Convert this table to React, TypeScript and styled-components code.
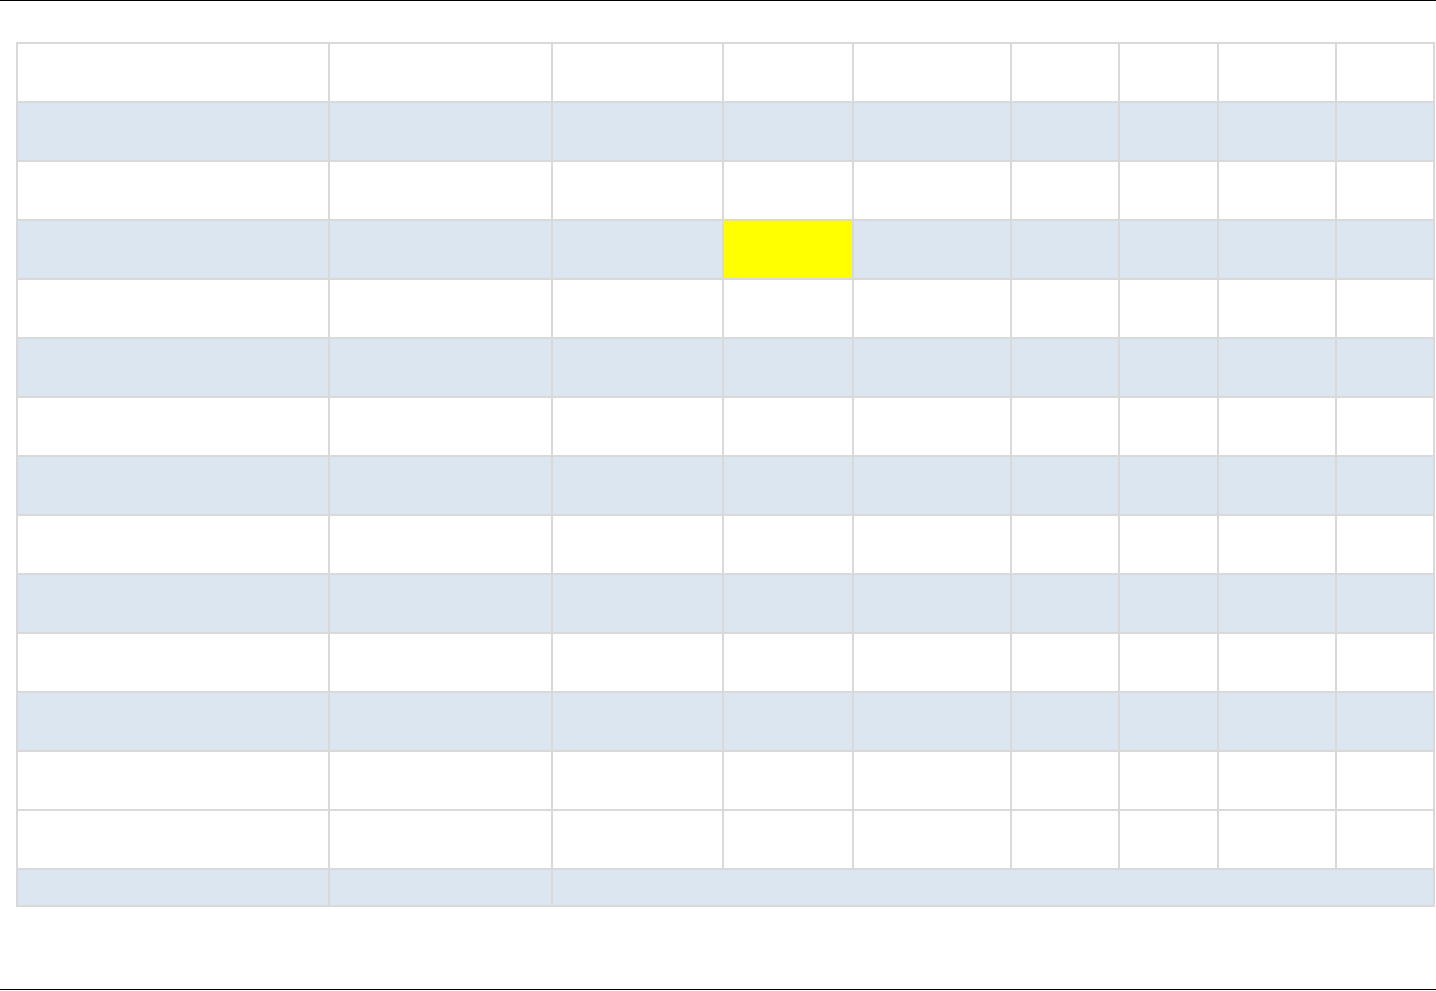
import React from "react";
import styled, { createGlobalStyle } from "styled-components";

const GlobalStyle = createGlobalStyle`
  html, body {
    margin: 0;
    padding: 0;
    background: #ffffff;
    font-family: "Liberation Sans", Arial, sans-serif;
  }
`;

const Page = styled.div`
  box-sizing: border-box;
  height: 990px;
  border-top: 1px solid #000;
  border-bottom: 1px solid #000;
  padding: 41px 0 0 16px;
`;

const Sheet = styled.div`
  display: grid;
  width: 1419px;
  grid-template-columns: 310px 221px 169px 128px 156px 106px 97px 116px 96px;
  grid-template-rows: repeat(14, 57px) 35px;
  gap: 2px;
  padding: 2px;
  box-sizing: border-box;
  background: #d9d9d9;
`;

const Cell = styled.div<{ $tone: "white" | "blue" | "yellow"; $span?: number }>`
  background: ${(p) =>
    p.$tone === "yellow" ? "#ffff00" : p.$tone === "blue" ? "#dce6f1" : "#ffffff"};
  grid-column: ${(p) => (p.$span ? `span ${p.$span}` : "auto")};
  font-size: 14px;
  color: #000;
`;

const COLS = 9;
// row shading, top to bottom (the short summary row is added after)
const tones: Array<"white" | "blue"> = [
  "white", "blue", "white", "blue", "white", "blue", "white",
  "blue", "white", "blue", "white", "blue", "white", "white",
];

export default function App() {
  return (
    <>
      <GlobalStyle />
      <Page>
        <Sheet>
          {tones.map((tone, r) =>
            Array.from({ length: COLS }).map((_, c) => (
              <Cell
                key={`${r}-${c}`}
                $tone={r === 3 && c === 3 ? "yellow" : tone}
              />
            ))
          )}
          <Cell $tone="blue" />
          <Cell $tone="blue" />
          <Cell $tone="blue" $span={7} />
        </Sheet>
      </Page>
    </>
  );
}
